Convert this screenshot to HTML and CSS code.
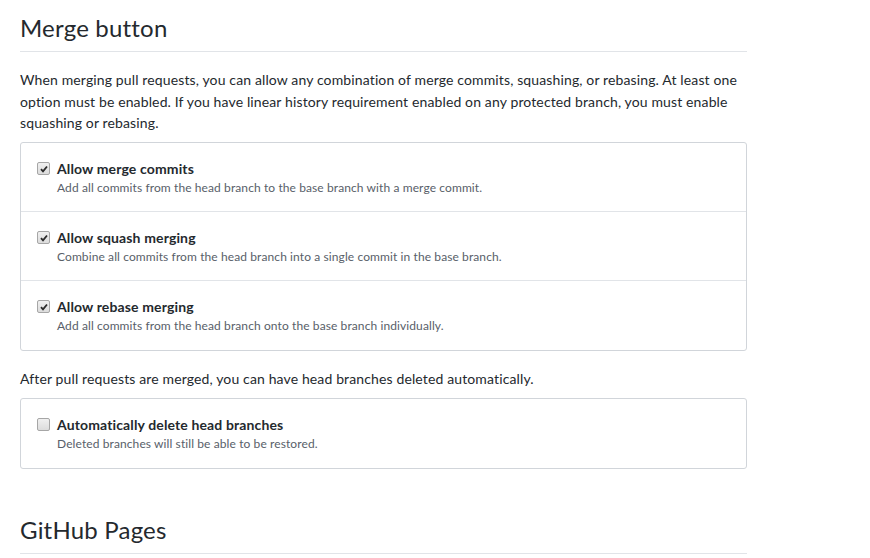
FILE: index.html
```html
<!DOCTYPE html>
<html>
<head>
<meta charset="utf-8">
<link rel="stylesheet" href="styles.css">
</head>
<body>
<div class="page">
  <h2 class="subhead">Merge button</h2>
  <p class="intro">When merging pull requests, you can allow any combination of merge commits, squashing, or rebasing. At least one option must be enabled. If you have linear history requirement enabled on any protected branch, you must enable squashing or rebasing.</p>
  <div class="box">
    <div class="row">
      <label class="check"><span class="cb checked"><svg viewBox="0 0 12 12" width="12" height="12"><path d="M2.4 6.2 L4.8 8.8 L9.6 3" fill="none" stroke="#2b2b2b" stroke-width="2.2"/></svg></span>Allow merge commits</label>
      <p class="note">Add all commits from the head branch to the base branch with a merge commit.</p>
    </div>
    <div class="row">
      <label class="check"><span class="cb checked"><svg viewBox="0 0 12 12" width="12" height="12"><path d="M2.4 6.2 L4.8 8.8 L9.6 3" fill="none" stroke="#2b2b2b" stroke-width="2.2"/></svg></span>Allow squash merging</label>
      <p class="note">Combine all commits from the head branch into a single commit in the base branch.</p>
    </div>
    <div class="row">
      <label class="check"><span class="cb checked"><svg viewBox="0 0 12 12" width="12" height="12"><path d="M2.4 6.2 L4.8 8.8 L9.6 3" fill="none" stroke="#2b2b2b" stroke-width="2.2"/></svg></span>Allow rebase merging</label>
      <p class="note">Add all commits from the head branch onto the base branch individually.</p>
    </div>
  </div>
  <p class="after">After pull requests are merged, you can have head branches deleted automatically.</p>
  <div class="box">
    <div class="row">
      <label class="check"><span class="cb"></span>Automatically delete head branches</label>
      <p class="note">Deleted branches will still be able to be restored.</p>
    </div>
  </div>
  <h2 class="subhead second">GitHub Pages</h2>
</div>
</body>
</html>
```

FILE: styles.css
```css
html, body {
  margin: 0;
  padding: 0;
  background: #fff;
}
body {
  font-family: Lato, "Liberation Sans", sans-serif;
  color: #24292e;
  font-size: 14px;
  line-height: 1.5;
  letter-spacing: 0.13px;
}
.page {
  width: 727px;
  padding: 0 20px;
}
.subhead {
  margin: 13px 0 0;
  padding-bottom: 8px;
  font-size: 24px;
  font-weight: 400;
  line-height: 30px;
  letter-spacing: 0.2px;
  border-bottom: 1px solid #e1e4e8;
}
.subhead.second {
  margin-top: 46px;
}
.intro {
  margin: 17px 0 8px;
  line-height: 21.5px;
}
.after {
  margin: 17px 0 9px;
  line-height: 21px;
}
.box {
  border: 1px solid #d1d5da;
  border-radius: 3px;
}
.row {
  padding: 16px 16px 14px 36px;
  border-top: 1px solid #e1e4e8;
}
.row:first-child {
  border-top: 0;
}
.row:last-child {
  padding-bottom: 15px;
}
.check {
  display: flex;
  align-items: center;
  font-weight: 700;
  line-height: 20px;
  margin-left: -20px;
}
.cb {
  box-sizing: border-box;
  width: 13px;
  height: 13px;
  margin-right: 7px;
  border: 1px solid #a6a6a6;
  border-radius: 2px;
  background: linear-gradient(#f0f0f0, #dcdcdc);
  display: flex;
  align-items: center;
  justify-content: center;
}
.cb svg {
  width: 10px;
  height: 10px;
}
.note {
  margin: 0;
  font-size: 12px;
  line-height: 18px;
  color: #586069;
  letter-spacing: 0.1px;
}
```
